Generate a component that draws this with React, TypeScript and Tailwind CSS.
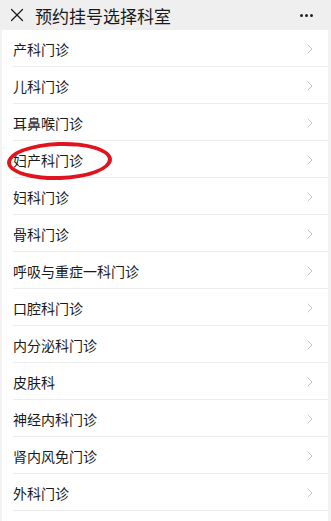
import { X, ChevronRight } from "lucide-react";

const DEPARTMENTS = [
  "产科门诊",
  "儿科门诊",
  "耳鼻喉门诊",
  "妇产科门诊",
  "妇科门诊",
  "骨科门诊",
  "呼吸与重症一科门诊",
  "口腔科门诊",
  "内分泌科门诊",
  "皮肤科",
  "神经内科门诊",
  "肾内风免门诊",
  "外科门诊",
];

const font = "font-['Noto_Sans_CJK_SC','Noto_Sans',sans-serif]";

export default function App() {
  return (
    <div className={`flex h-[521px] w-[331px] flex-col overflow-hidden bg-[#f2f2f2] ${font}`}>
      <header className="flex h-[30px] shrink-0 items-center bg-[#efefef] pl-[6px] pr-[18px]">
        <X className="h-[22px] w-[22px] text-[#1a1a1a]" strokeWidth={1.3} />
        <h1 className="ml-[7px] flex-1 text-[17px] leading-none text-[#1a1a1a]">
          预约挂号选择科室
        </h1>
        <div className="flex gap-[2px]">
          <span className="h-[3px] w-[3px] rounded-full bg-[#222]" />
          <span className="h-[3px] w-[3px] rounded-full bg-[#222]" />
          <span className="h-[3px] w-[3px] rounded-full bg-[#222]" />
        </div>
      </header>
      <ul className="ml-[2px] mr-[3px] flex-1 bg-white">
        {DEPARTMENTS.map((name, i) => (
          <li key={name} className="relative flex h-[37px] items-center pl-[11px] pr-[10px]">
            <span className="flex-1 text-[14px] leading-none text-[#1a1a1a]">{name}</span>
            <ChevronRight className="h-[16px] w-[16px] text-[#bcbcbc]" strokeWidth={1.4} />
            <div className="absolute bottom-0 left-[11px] right-0 h-px bg-[#ececec]" />
            {i === 3 && (
              <div className="absolute left-[5px] top-[1px] h-[38px] w-[105px] rounded-[50%] border-4 border-[#e0141e] -rotate-2" />
            )}
          </li>
        ))}
      </ul>
    </div>
  );
}
